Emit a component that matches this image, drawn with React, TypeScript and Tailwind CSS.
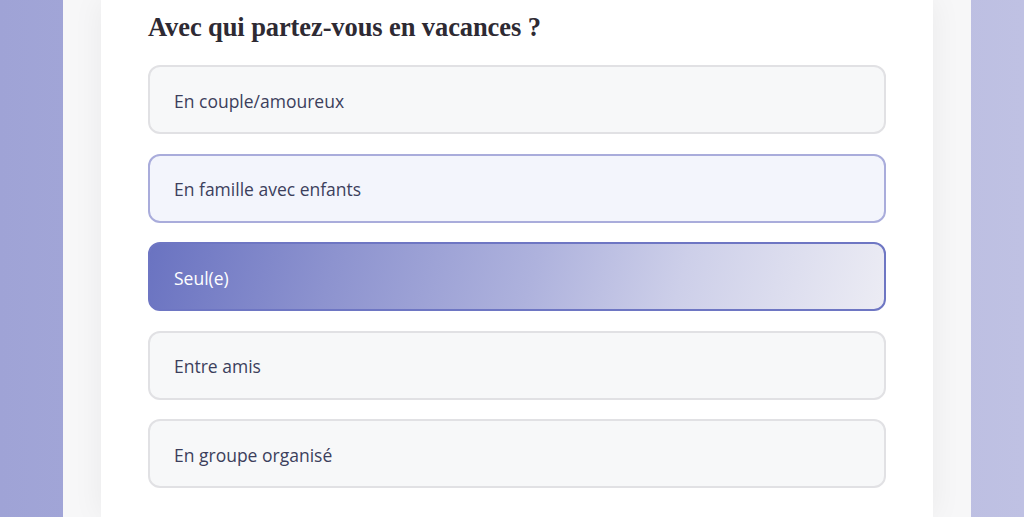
import React, { useState } from 'react';

const options = [
  'En couple/amoureux',
  'En famille avec enfants',
  'Seul(e)',
  'Entre amis',
  'En groupe organisé',
];

export default function App() {
  const [selected, setSelected] = useState(2);
  const hovered = 1;

  return (
    <div className="h-[517px] overflow-hidden bg-gradient-to-r from-[#9fa3d6] to-[#bfc1e3] flex">
      <div className="ml-[63px] w-[908px] h-full bg-[#f7f7f8] px-[38px]">
        <div className="h-full bg-white shadow-[0_0_30px_rgba(0,0,0,0.06)] px-[47px] pt-[11px]">
          <h2
            className="text-[26.5px] font-bold text-[#2e2a33] leading-[32px] mb-[22px] tracking-[-0.1px]"
            style={{ fontFamily: '"Liberation Serif", "DejaVu Serif", serif' }}
          >
            Avec qui partez-vous en vacances ?
          </h2>
          <div className="flex flex-col gap-[19.5px]" style={{ fontFamily: '"Open Sans", "Noto Sans", sans-serif' }}>
            {options.map((label, i) => {
              const isSel = i === selected;
              const isHover = i === hovered && !isSel;
              let cls = 'border-[#e1e1e4] bg-[#f7f8f9] text-[#3c3f5c]';
              if (isHover) cls = 'border-[#a9acdb] bg-[#f3f5fc] text-[#3c3f5c]';
              if (isSel) cls = 'border-[#6e76c3] bg-[linear-gradient(105deg,#6a73c1_0%,#8d93cf_25%,#aeb2dd_52%,#cdcfe9_72%,#ececf4_100%)] text-white';
              return (
                <button
                  key={label}
                  onClick={() => setSelected(i)}
                  className={`h-[69px] w-full rounded-[12px] border-2 px-[24px] pt-[3px] text-left text-[17.5px] ${cls}`}
                >
                  {label}
                </button>
              );
            })}
          </div>
        </div>
      </div>
    </div>
  );
}
